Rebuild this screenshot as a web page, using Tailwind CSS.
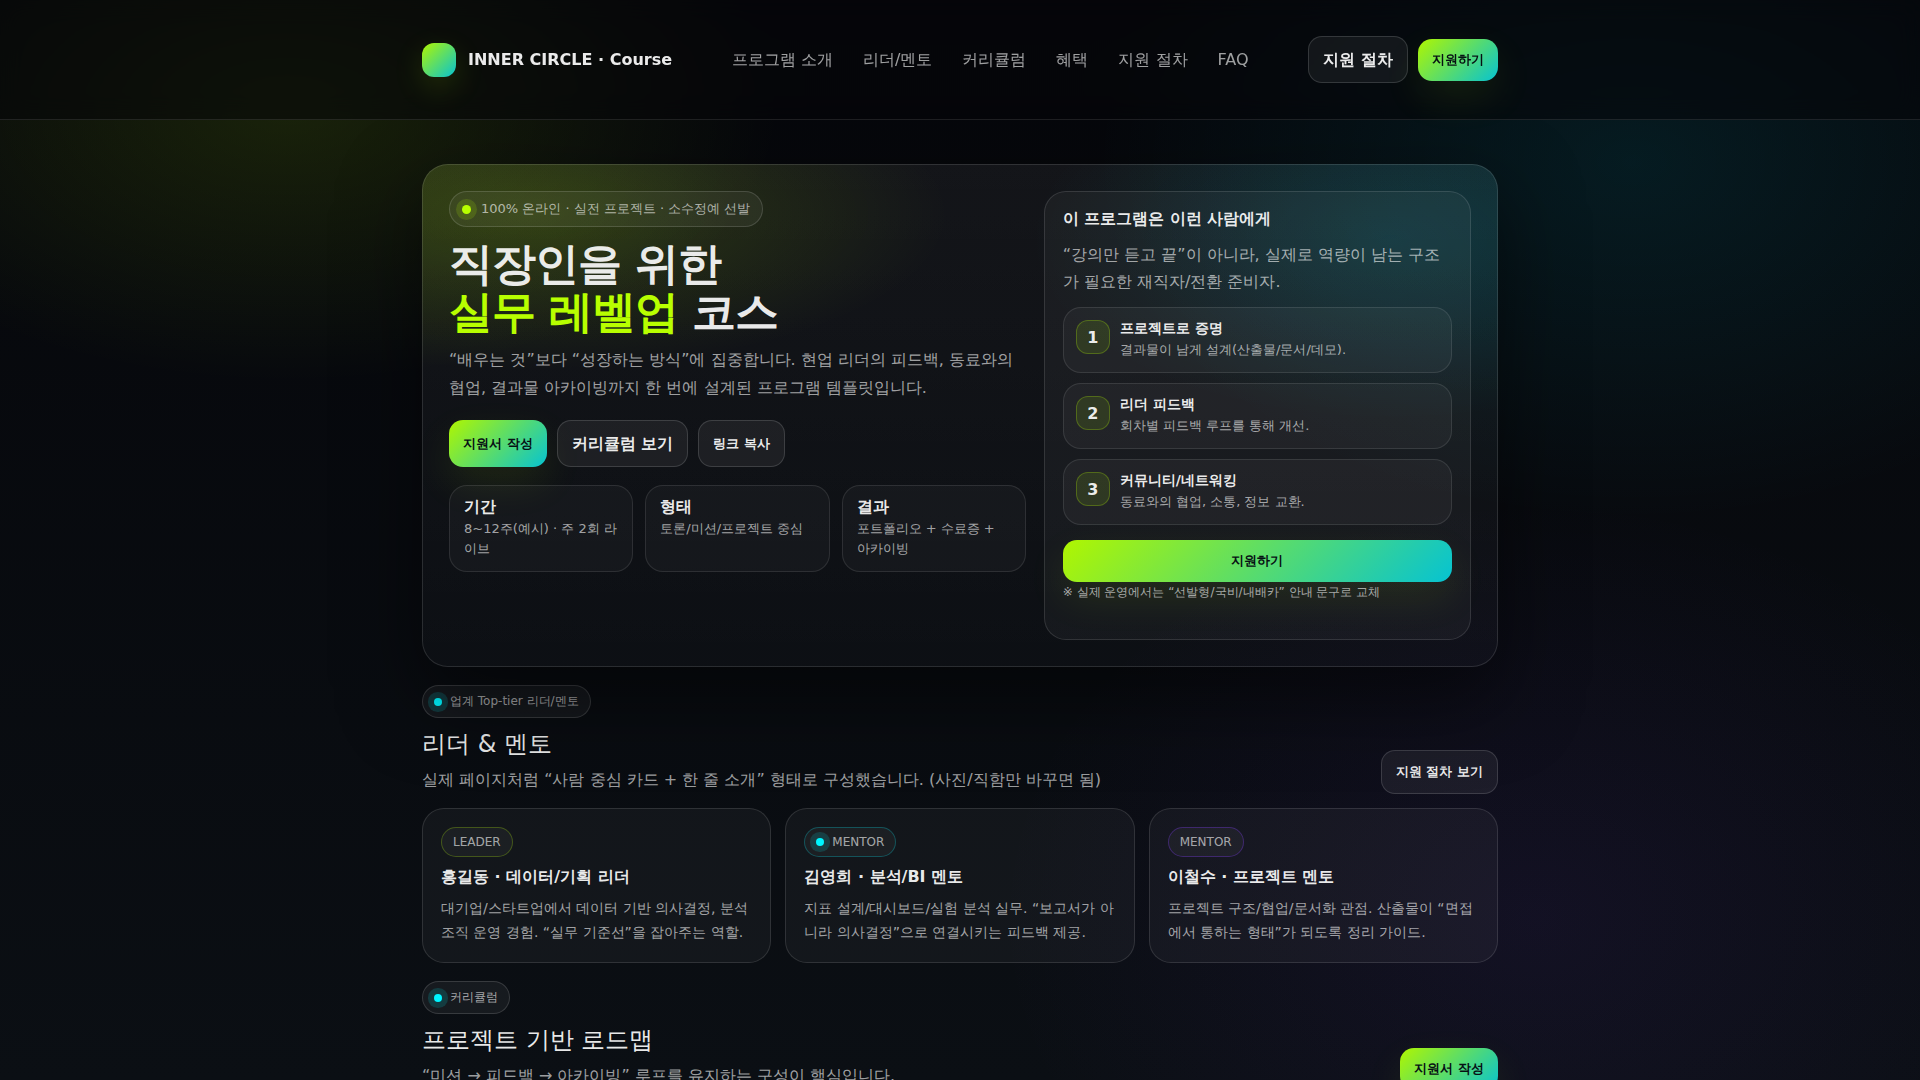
<!DOCTYPE html>
<html lang="ko">
  <head>
    <meta charset="UTF-8" />
    <meta name="viewport" content="width=device-width, initial-scale=1.0" />
    <title>INNER CIRCLE · Course</title>
    <script src="https://cdn.jsdelivr.net/npm/@tailwindcss/browser@4"></script>
  </head>
  <body
    class="min-h-screen font-['DejaVu_Sans',sans-serif] text-base leading-[25px] text-white/92 bg-fixed bg-[#05060a] bg-[radial-gradient(900px_500px_at_15%_10%,rgba(184,255,0,0.11),transparent_55%),radial-gradient(900px_600px_at_85%_15%,rgba(0,229,255,0.09),transparent_60%),radial-gradient(900px_700px_at_80%_85%,rgba(124,58,237,0.08),transparent_60%),linear-gradient(180deg,#05060a,#0b0f14)]"
  >
    <!-- Header -->
    <header
      class="sticky top-0 z-20 border-b border-white/10 bg-[#05060a]/55 backdrop-blur-md"
    >
      <div
        class="mx-auto flex h-[119px] max-w-[1120px] items-center justify-between px-[22px]"
      >
        <a href="#" class="flex items-center gap-3 font-bold">
          <span
            class="size-[34px] rounded-xl bg-[linear-gradient(135deg,#b0f600,#06c3d2)] shadow-[0_10px_30px_rgba(184,255,0,0.15)]"
          ></span>
          <span>INNER CIRCLE · Course</span>
        </a>
        <nav class="flex gap-[30px] text-white/62">
          <a href="#about">프로그램 소개</a>
          <a href="#leaders">리더/멘토</a>
          <a href="#curriculum">커리큘럼</a>
          <a href="#benefits">혜택</a>
          <a href="#process">지원 절차</a>
          <a href="#faq">FAQ</a>
        </nav>
        <div class="flex items-center gap-[10px]">
          <a
            href="#process"
            class="rounded-[14px] border border-white/14 bg-white/6 px-[14px] py-[10px] font-bold"
            >지원 절차</a
          >
          <button
            class="rounded-[14px] bg-[linear-gradient(135deg,#b0f600,#06c3d2)] px-[14px] py-[11px] text-[13px] leading-5 font-bold text-[#071014] shadow-[0_16px_40px_rgba(184,255,0,0.09)]"
          >
            지원하기
          </button>
        </div>
      </div>
    </header>

    <main
      class="mx-auto flex max-w-[1120px] flex-col gap-[18px] px-[22px] pt-11 pb-[22px]"
    >
      <!-- Hero -->
      <section
        id="about"
        class="relative grid grid-cols-[1.35fr_1fr] gap-[18px] rounded-[26px] border border-white/12 p-[26px] shadow-[0_30px_80px_rgba(0,0,0,0.5)] bg-origin-border bg-[radial-gradient(700px_260px_at_10%_10%,rgba(184,255,0,0.16),transparent_60%),radial-gradient(600px_300px_at_90%_15%,rgba(0,229,255,0.12),transparent_60%),linear-gradient(180deg,rgba(255,255,255,0.06),rgba(255,255,255,0.02))]"
      >
        <div>
          <div
            class="flex w-fit items-center gap-[10px] rounded-full border border-white/14 bg-white/5 px-3 py-[7px] text-[13px] leading-5 text-white/62"
          >
            <span
              class="size-[9px] rounded-full bg-[#b8ff00] ring-6 ring-[#b8ff00]/15"
            ></span>
            100% 온라인 · 실전 프로젝트 · 소수정예 선발
          </div>
          <h1
            class="mt-[13px] text-[44px] leading-[48px] font-bold tracking-tight"
          >
            직장인을 위한<br />
            <span class="text-[#b8ff00]">실무 레벨업</span> 코스
          </h1>
          <p class="mt-[10px] leading-7 text-white/62">
            “배우는 것”보다 “성장하는 방식”에 집중합니다. 현업 리더의 피드백,
            동료와의 협업, 결과물 아카이빙까지 한 번에 설계된 프로그램
            템플릿입니다.
          </p>
          <div class="mt-[18px] flex gap-[10px] font-bold">
            <button
              class="rounded-[14px] bg-[linear-gradient(135deg,#b0f600,#06c3d2)] px-[14px] text-[13px] text-[#071014] shadow-[0_16px_40px_rgba(184,255,0,0.09)]"
            >
              지원서 작성
            </button>
            <a
              href="#curriculum"
              class="rounded-[14px] border border-white/14 bg-white/6 px-[14px] py-[10px]"
              >커리큘럼 보기</a
            >
            <button
              class="rounded-[14px] border border-white/14 bg-white/6 px-[14px] text-[13px]"
            >
              링크 복사
            </button>
          </div>
          <div class="mt-[18px] grid grid-cols-3 gap-3">
            <div
              class="rounded-[18px] border border-white/10 bg-white/3 px-[14px] pt-2 pb-3"
            >
              <h3 class="font-bold">기간</h3>
              <p class="text-[13px] leading-5 text-white/62">
                8~12주(예시) · 주 2회 라이브
              </p>
            </div>
            <div
              class="rounded-[18px] border border-white/10 bg-white/3 px-[14px] pt-2 pb-3"
            >
              <h3 class="font-bold">형태</h3>
              <p class="text-[13px] leading-5 text-white/62">
                토론/미션/프로젝트 중심
              </p>
            </div>
            <div
              class="rounded-[18px] border border-white/10 bg-white/3 px-[14px] pt-2 pb-3"
            >
              <h3 class="font-bold">결과</h3>
              <p class="text-[13px] leading-5 text-white/62">
                포트폴리오 + 수료증 + 아카이빙
              </p>
            </div>
          </div>
        </div>

        <aside
          class="rounded-[22px] border border-white/12 bg-white/4 px-[18px] pt-[14px] pb-[37px]"
        >
          <h3 class="font-bold">이 프로그램은 이런 사람에게</h3>
          <p class="mt-[10px] leading-[27px] text-white/62">
            “강의만 듣고 끝”이 아니라, 실제로 역량이 남는 구조가 필요한
            재직자/전환 준비자.
          </p>
          <ol class="mt-3 flex flex-col gap-[10px]">
            <li
              class="flex gap-[10px] rounded-[18px] border border-white/10 bg-white/4 px-3 pt-[9px] pb-[11px]"
            >
              <span
                class="mt-[3px] grid size-[34px] place-items-center rounded-xl border border-[#b8ff00]/25 bg-[#b8ff00]/10 font-bold"
                >1</span
              >
              <div>
                <h4 class="text-sm leading-[22px] font-bold">프로젝트로 증명</h4>
                <p class="text-[13px] leading-[22px] text-white/62">
                  결과물이 남게 설계(산출물/문서/데모).
                </p>
              </div>
            </li>
            <li
              class="flex gap-[10px] rounded-[18px] border border-white/10 bg-white/4 px-3 pt-[9px] pb-[11px]"
            >
              <span
                class="mt-[3px] grid size-[34px] place-items-center rounded-xl border border-[#b8ff00]/25 bg-[#b8ff00]/10 font-bold"
                >2</span
              >
              <div>
                <h4 class="text-sm leading-[22px] font-bold">리더 피드백</h4>
                <p class="text-[13px] leading-[22px] text-white/62">
                  회차별 피드백 루프를 통해 개선.
                </p>
              </div>
            </li>
            <li
              class="flex gap-[10px] rounded-[18px] border border-white/10 bg-white/4 px-3 pt-[9px] pb-[11px]"
            >
              <span
                class="mt-[3px] grid size-[34px] place-items-center rounded-xl border border-[#b8ff00]/25 bg-[#b8ff00]/10 font-bold"
                >3</span
              >
              <div>
                <h4 class="text-sm leading-[22px] font-bold">커뮤니티/네트워킹</h4>
                <p class="text-[13px] leading-[22px] text-white/62">
                  동료와의 협업, 소통, 정보 교환.
                </p>
              </div>
            </li>
          </ol>
          <button
            class="mt-[15px] block w-full rounded-[14px] bg-[linear-gradient(135deg,#b0f600,#06c3d2)] py-[11px] text-[13px] leading-5 font-bold text-[#071014] shadow-[0_16px_40px_rgba(184,255,0,0.09)]"
          >
            지원하기
          </button>
          <p class="text-xs leading-5 text-white/62">
            ※ 실제 운영에서는 “선발형/국비/내배카” 안내 문구로 교체
          </p>
        </aside>
      </section>

      <!-- Leaders -->
      <section id="leaders">
        <div class="flex items-end justify-between">
          <div>
            <div
              class="flex w-fit items-center gap-2 rounded-full border border-white/14 bg-white/5 px-[11px] py-[6px] text-xs leading-[19px] text-white/62"
            >
              <span
                class="size-2 rounded-full bg-[#00f5ff] ring-6 ring-[#00f5ff]/15"
              ></span>
              업계 Top-tier 리더/멘토
            </div>
            <h2 class="mt-2 text-2xl leading-9">리더 &amp; 멘토</h2>
            <p class="mt-1 leading-7 text-white/62">
              실제 페이지처럼 “사람 중심 카드 + 한 줄 소개” 형태로 구성했습니다.
              (사진/직함만 바꾸면 됨)
            </p>
          </div>
          <button
            class="rounded-[14px] border border-white/14 bg-white/6 px-[14px] py-[11px] text-[13px] leading-5 font-bold"
          >
            지원 절차 보기
          </button>
        </div>
        <div class="mt-[14px] grid grid-cols-3 gap-[14px]">
          <article
            class="rounded-[22px] border border-white/12 bg-white/4 p-[18px]"
          >
            <span
              class="flex w-fit items-center gap-2 rounded-full border border-[#b8ff00]/25 bg-white/4 px-[11px] py-1 text-xs leading-5 text-white/62"
              >LEADER</span
            >
            <h3 class="mt-[7px] font-bold">홍길동 · 데이터/기획 리더</h3>
            <p class="mt-[7px] text-sm leading-6 text-white/62">
              대기업/스타트업에서 데이터 기반 의사결정, 분석 조직 운영 경험.
              “실무 기준선”을 잡아주는 역할.
            </p>
          </article>
          <article
            class="rounded-[22px] border border-white/12 bg-white/4 p-[18px]"
          >
            <span
              class="flex w-fit items-center gap-2 rounded-full border border-[#00f5ff]/25 bg-white/4 px-[11px] py-1 text-xs leading-5 text-white/62"
            >
              <span
                class="size-2 rounded-full bg-[#00f5ff] ring-6 ring-[#00f5ff]/15"
              ></span>
              MENTOR
            </span>
            <h3 class="mt-[7px] font-bold">김영희 · 분석/BI 멘토</h3>
            <p class="mt-[7px] text-sm leading-6 text-white/62">
              지표 설계/대시보드/실험 분석 실무. “보고서가 아니라 의사결정”으로
              연결시키는 피드백 제공.
            </p>
          </article>
          <article
            class="rounded-[22px] border border-white/12 bg-white/4 p-[18px]"
          >
            <span
              class="flex w-fit items-center gap-2 rounded-full border border-[#7c3aed]/35 bg-white/4 px-[11px] py-1 text-xs leading-5 text-white/62"
              >MENTOR</span
            >
            <h3 class="mt-[7px] font-bold">이철수 · 프로젝트 멘토</h3>
            <p class="mt-[7px] text-sm leading-6 text-white/62">
              프로젝트 구조/협업/문서화 관점. 산출물이 “면접에서 통하는 형태”가
              되도록 정리 가이드.
            </p>
          </article>
        </div>
      </section>

      <!-- Curriculum -->
      <section id="curriculum">
        <div class="flex items-end justify-between">
          <div>
            <div
              class="flex w-fit items-center gap-2 rounded-full border border-white/14 bg-white/5 px-[11px] py-[6px] text-xs leading-[19px] text-white/62"
            >
              <span
                class="size-2 rounded-full bg-[#00f5ff] ring-6 ring-[#00f5ff]/15"
              ></span>
              커리큘럼
            </div>
            <h2 class="mt-2 text-2xl leading-9">프로젝트 기반 로드맵</h2>
            <p class="mt-1 leading-7 text-white/62">
              “미션 → 피드백 → 아카이빙” 루프를 유지하는 구성이 핵심입니다.
            </p>
          </div>
          <button
            class="rounded-[14px] bg-[linear-gradient(135deg,#b0f600,#06c3d2)] px-[14px] py-[11px] text-[13px] leading-5 font-bold text-[#071014] shadow-[0_16px_40px_rgba(184,255,0,0.09)]"
          >
            지원서 작성
          </button>
        </div>
      </section>
    </main>
  </body>
</html>
